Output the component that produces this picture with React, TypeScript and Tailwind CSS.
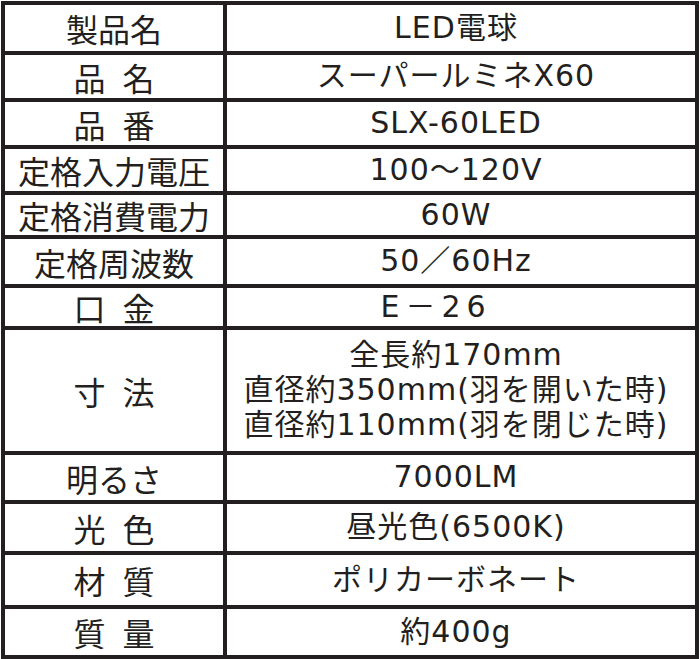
const rows: { label: string[]; value: string[]; h: string; extra?: string }[] = [
  { label: ["製品名"], value: ["LED電球"], h: "h-[46px]" },
  { label: ["品", "名"], value: ["スーパールミネX60"], h: "h-[47px]" },
  { label: ["品", "番"], value: ["SLX-60LED"], h: "h-[47px]" },
  { label: ["定格入力電圧"], value: ["100〜120V"], h: "h-[46px]" },
  { label: ["定格消費電力"], value: ["60W"], h: "h-[44px]" },
  { label: ["定格周波数"], value: ["50／60Hz"], h: "h-[49px]" },
  { label: ["口", "金"], value: ["E－26"], h: "h-[42px]", extra: "tracking-[6px] pr-[50px]" },
  {
    label: ["寸", "法"],
    value: ["全長約170mm", "直径約350mm(羽を開いた時)", "直径約110mm(羽を閉じた時)"],
    h: "h-[125px]",
  },
  { label: ["明るさ"], value: ["7000LM"], h: "h-[49px]" },
  { label: ["光", "色"], value: ["昼光色(6500K)"], h: "h-[51px]" },
  { label: ["材", "質"], value: ["ポリカーボネート"], h: "h-[54px]" },
  { label: ["質", "量"], value: ["約400g"], h: "h-[50px]" },
]

export default function App() {
  return (
    <div
      className="w-[700px] h-[659px] bg-white text-[#231f20]"
      style={{ fontFamily: '"Noto Sans CJK JP", "Noto Sans", sans-serif' }}
    >
      <div className="ml-px mt-px w-[698px] h-[658px] border-4 border-[#231f20] flex flex-col">
        {rows.map((row, i) => (
          <div
            key={i}
            className={`flex ${row.h} ${i > 0 ? "border-t-4 border-[#231f20]" : ""}`}
          >
            <div className="w-[218px] flex items-center justify-center gap-[17px] text-[32px] leading-none">
              {row.label.map((l) => (
                <span key={l}>{l}</span>
              ))}
            </div>
            <div
              className={`flex-1 border-l-4 border-[#231f20] flex flex-col items-center justify-center text-[30px] leading-[35px] pb-[2px] ${row.extra ?? "tracking-[1px] pr-[10px]"}`}
              style={{ fontFamily: '"DejaVu Sans", "Noto Sans CJK JP", sans-serif' }}
            >
              {row.value.map((v) => (
                <span key={v}>{v}</span>
              ))}
            </div>
          </div>
        ))}
      </div>
    </div>
  )
}
